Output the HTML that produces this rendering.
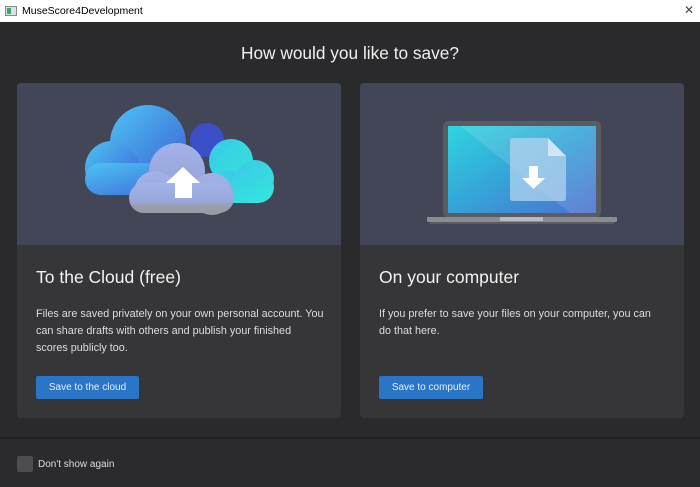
<!DOCTYPE html>
<html><head><meta charset="utf-8"><style>
*{margin:0;padding:0;box-sizing:border-box}
body{width:700px;height:487px;background:#2a2a2d;font-family:"Liberation Sans",sans-serif;position:relative;overflow:hidden;color:#e8e8e8}
.tb{position:absolute;left:0;top:0;width:700px;height:22px;background:#fff;color:#000;font-size:10.5px}
.tb .t{position:absolute;left:22px;top:5px}
.tb .ic{position:absolute;left:5px;top:6px;width:12px;height:10px;border:1px solid #888;background:#dde}
.tb .ic:before{content:"";position:absolute;left:1px;top:1px;width:4px;height:6px;background:#3a6}
.tb .x{position:absolute;left:684px;top:3px;font-size:12px;color:#444}
h1{position:absolute;top:43px;left:0;width:700px;text-align:center;font-size:17.3px;font-weight:normal;color:#f0f0f0}
.card{position:absolute;top:83px;width:324px;height:335px;background:#363638;border-radius:4px;overflow:hidden}
.img{height:162px;background:#434656;position:relative}
.card h2{position:absolute;left:19px;top:184px;font-size:17.5px;font-weight:normal;color:#f2f2f2}
.card p{position:absolute;left:19px;top:223px;width:305px;white-space:nowrap;font-size:10.8px;line-height:17px;color:#ddd}
.btn{position:absolute;left:19px;top:293px;height:23px;background:#2a75c6;color:#e6eef8;font-size:10px;border-radius:2px;line-height:23px;text-align:center}
.sep{position:absolute;left:0;top:437px;width:700px;height:2px;background:#222224}
.foot{position:absolute;left:0;top:439px;width:700px;height:48px;background:#2b2b2e}
.cb{position:absolute;left:17px;top:456px;width:16px;height:16px;background:#4d4d50;border-radius:2px}
.cbl{position:absolute;left:38px;top:459px;font-size:10px;color:#ddd}
</style></head><body>
<div class="tb"><div class="ic"></div><div class="t">MuseScore4Development</div><div class="x">✕</div></div>
<h1>How would you like to save?</h1>
<div class="card" style="left:17px">
 <div class="img"><svg width="324" height="162" viewBox="0 0 324 162">
  <defs>
   <linearGradient id="g1" x1="0" y1="0" x2="1" y2="1"><stop offset="0" stop-color="#4ec4f2"/><stop offset="1" stop-color="#3b5fd6"/></linearGradient>
   <linearGradient id="g2" x1="0" y1="0" x2="1" y2="1"><stop offset="0" stop-color="#3ac8e8"/><stop offset="1" stop-color="#34e6dc"/></linearGradient>
   <linearGradient id="g3" x1="0" y1="0" x2="0" y2="1"><stop offset="0" stop-color="#a3b3ea"/><stop offset="0.6" stop-color="#98a8dc"/><stop offset="0.8" stop-color="#9a9da8"/><stop offset="1" stop-color="#9a9ba5"/></linearGradient>
  </defs>
  <circle cx="190" cy="57" r="17" fill="#3a4fc8"/>
  <g fill="url(#g1)"><circle cx="131" cy="60" r="38"/><circle cx="95" cy="85" r="27"/><rect x="68" y="80" width="120" height="32" rx="16"/></g>
  <g fill="url(#g2)"><circle cx="214" cy="78" r="22"/><circle cx="238" cy="96" r="19"/><rect x="195" y="88" width="62" height="32" rx="16"/></g>
  <g fill="url(#g3)"><circle cx="160" cy="88" r="28"/><circle cx="138" cy="109" r="21"/><circle cx="195" cy="111" r="21"/><rect x="112" y="100" width="105" height="30" rx="15"/></g>
  <path d="M166 84 L183 100 L175 100 L175 115 L158 115 L158 100 L149 100 Z" fill="#fff"/>
 </svg></div>
 <h2>To the Cloud (free)</h2>
 <p>Files are saved privately on your own personal account. You<br>can share drafts with others and publish your finished<br>scores publicly too.</p>
 <div class="btn" style="width:103px">Save to the cloud</div>
</div>
<div class="card" style="left:360px">
 <div class="img"><svg width="324" height="162" viewBox="0 0 324 162">
  <defs><linearGradient id="s" x1="0" y1="0" x2="1" y2="1"><stop offset="0" stop-color="#2fd4e0"/><stop offset="0.5" stop-color="#35a3d8"/><stop offset="1" stop-color="#4c6fd0"/></linearGradient></defs>
  <rect x="83" y="38" width="158" height="97" rx="6" fill="#5a5c62"/>
  <rect x="88" y="43" width="148" height="87" fill="url(#s)"/>
  <path d="M100 43 L236 43 L236 130 L210 130 Z" fill="#ffffff" opacity="0.12"/>
  <rect x="67" y="134" width="190" height="5" rx="1" fill="#8a8c92"/>
  <rect x="70" y="139" width="184" height="2" fill="#5a5c62"/>
  <rect x="140" y="134" width="43" height="4" fill="#b8bac0"/>
  <path d="M153 55 L188 55 L206 73 L206 115 Q206 118 203 118 L153 118 Q150 118 150 115 L150 58 Q150 55 153 55 Z" fill="#b3d3ee" opacity="0.75"/>
  <path d="M188 55 L206 73 L188 73 Z" fill="#d0e6f5"/>
  <path d="M169 83 L178 83 L178 95 L185 95 L173.5 106 L162 95 L169 95 Z" fill="#fff"/>
 </svg></div>
 <h2>On your computer</h2>
 <p>If you prefer to save your files on your computer, you can<br>do that here.</p>
 <div class="btn" style="width:104px">Save to computer</div>
</div>
<div class="sep"></div><div class="foot"></div>
<div class="cb"></div><div class="cbl">Don't show again</div>
</body></html>
